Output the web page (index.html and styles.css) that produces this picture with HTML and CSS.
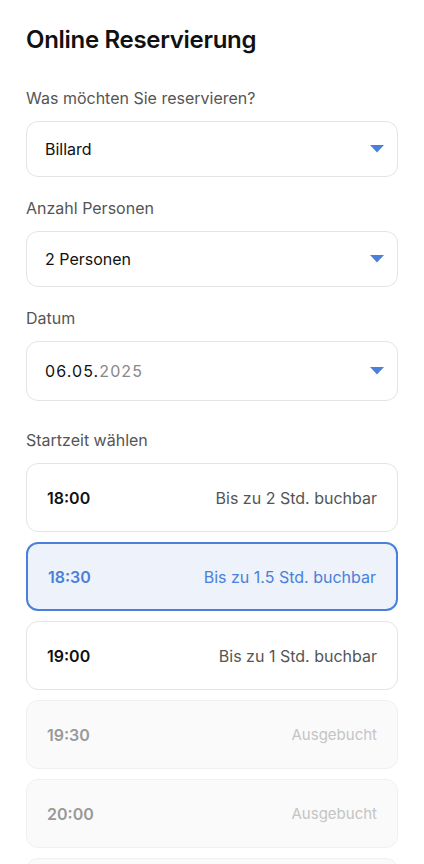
FILE: index.html
```html
<!DOCTYPE html>
<html lang="de">
<head>
  <meta charset="UTF-8" />
  <meta name="viewport" content="width=device-width, initial-scale=1.0"/>
  <title>Online Reservierung</title>
  <link rel="stylesheet" href="styles.css">
</head>
<body>
  <h1>Online Reservierung</h1>

  <div class="form-group">
    <label>Was möchten Sie reservieren?</label>
    <div class="select">
      <span>Billard</span>
      <svg class="arrow" width="14" height="8" viewBox="0 0 14 8"><path d="M0 0H14L7 7.5Z" fill="#4a80d9"/></svg>
    </div>
  </div>

  <div class="form-group">
    <label>Anzahl Personen</label>
    <div class="select">
      <span>2 Personen</span>
      <svg class="arrow" width="14" height="8" viewBox="0 0 14 8"><path d="M0 0H14L7 7.5Z" fill="#4a80d9"/></svg>
    </div>
  </div>

  <div class="form-group">
    <label>Datum</label>
    <div class="select date">
      <span class="date-text">06.05.<span class="year">2025</span></span>
      <svg class="arrow" width="14" height="8" viewBox="0 0 14 8"><path d="M0 0H14L7 7.5Z" fill="#4a80d9"/></svg>
    </div>
  </div>

  <div class="form-group slots-group">
    <label>Startzeit wählen</label>
    <div class="slots">
      <div class="slot">
        <span class="time">18:00</span>
        <span class="info">Bis zu 2 Std. buchbar</span>
      </div>
      <div class="slot selected">
        <span class="time">18:30</span>
        <span class="info">Bis zu 1.5 Std. buchbar</span>
      </div>
      <div class="slot">
        <span class="time">19:00</span>
        <span class="info">Bis zu 1 Std. buchbar</span>
      </div>
      <div class="slot disabled">
        <span class="time">19:30</span>
        <span class="info">Ausgebucht</span>
      </div>
      <div class="slot disabled">
        <span class="time">20:00</span>
        <span class="info">Ausgebucht</span>
      </div>
      <div class="slot disabled">
        <span class="time">20:30</span>
        <span class="info">Ausgebucht</span>
      </div>
    </div>
  </div>
</body>
</html>
```

FILE: styles.css
```css
body {
  font-family: Inter, "Noto Sans", sans-serif;
  margin: 0;
  padding: 0 26px;
  background: #fff;
  color: #111;
}

h1 {
  font-size: 24px;
  font-weight: 600;
  letter-spacing: -0.3px;
  margin: 26px 0 34px;
  line-height: 28px;
}

.form-group {
  margin-bottom: 21px;
}

label {
  display: block;
  font-size: 16px;
  line-height: 20px;
  color: #555;
  margin-bottom: 13px;
}

.select {
  display: flex;
  align-items: center;
  justify-content: space-between;
  height: 56px;
  box-sizing: border-box;
  border: 1.5px solid #e3e3e8;
  border-radius: 12px;
  padding: 0 13px 0 18px;
  font-size: 16px;
}

.select.date {
  height: 60px;
}

.date-text {
  letter-spacing: 1.1px;
}

.year {
  color: #888;
}

.slots-group {
  margin-top: 29px;
}

.slots {
  display: flex;
  flex-direction: column;
  gap: 10px;
}

.slot {
  display: flex;
  align-items: center;
  justify-content: space-between;
  height: 69px;
  box-sizing: border-box;
  border: 1.5px solid #e3e3e8;
  border-radius: 12px;
  padding: 0 20px;
}

.time {
  font-size: 16px;
  font-weight: 600;
  color: #111;
}

.info {
  font-size: 16px;
  color: #555;
}

.slot.selected {
  background: #edf2fb;
  border: 2px solid #4a80d9;
}

.slot.selected .time,
.slot.selected .info {
  color: #4a80d9;
}

.slot.disabled {
  background: #fafafa;
  border-color: #f0f0f2;
}

.slot.disabled .time {
  color: #999;
}

.slot.disabled .info {
  font-size: 15px;
  color: #c4c4c4;
}
```
